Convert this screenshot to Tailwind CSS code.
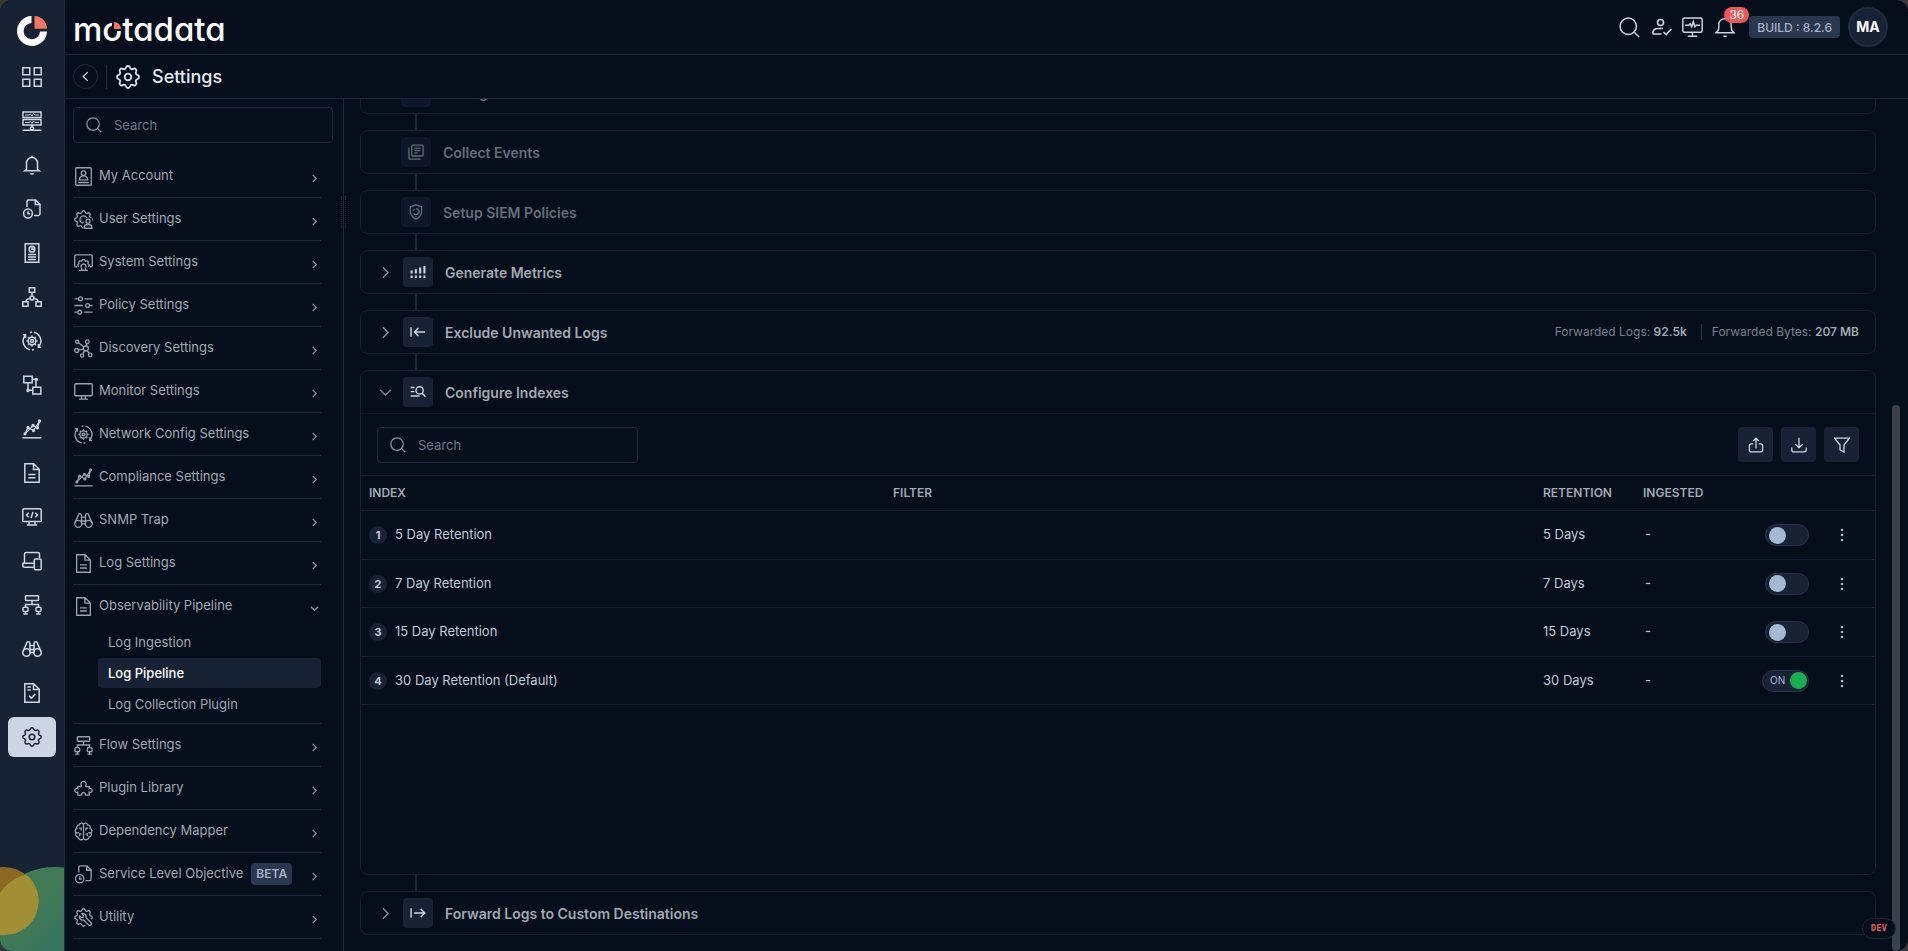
<!DOCTYPE html>
<html lang="en">
<head>
    <meta charset="UTF-8">
    <meta name="viewport" content="width=device-width, initial-scale=1.0">
    <title>Settings - Log Pipeline</title>
    <script src="https://cdn.jsdelivr.net/npm/@tailwindcss/browser@4"></script>
</head>
<body class="bg-[#37373a] font-['Inter','Liberation_Sans',sans-serif] text-[13px] text-[#a3a8b0]">

    <!-- icon set -->
    <svg class="hidden">
        <symbol id="gear" viewBox="2.2 2.2 19.6 19.6"><path d="M10.325 4.317c.426-1.756 2.924-1.756 3.35 0a1.724 1.724 0 0 0 2.573 1.066c1.543-.94 3.31.826 2.37 2.37a1.724 1.724 0 0 0 1.065 2.572c1.756.426 1.756 2.924 0 3.35a1.724 1.724 0 0 0-1.066 2.573c.94 1.543-.826 3.31-2.37 2.37a1.724 1.724 0 0 0-2.572 1.065c-.426 1.756-2.924 1.756-3.35 0a1.724 1.724 0 0 0-2.573-1.066c-1.543.94-3.31-.826-2.37-2.37a1.724 1.724 0 0 0-1.065-2.572c-1.756-.426-1.756-2.924 0-3.35a1.724 1.724 0 0 0 1.066-2.573c-.94-1.543.826-3.31 2.37-2.37 1 .608 2.296.07 2.572-1.065z"/><circle cx="12" cy="12" r="2.7"/></symbol>
        <symbol id="grid" viewBox="0 0 20 20"><path d="M.8.8h6.9v6.9H.8zM12.3.8h6.9v6.9h-6.9zM.8 12.3h6.9v6.9H.8zM12.3 12.3h6.9v6.9h-6.9z"/></symbol>
        <symbol id="server" viewBox="0 0 20 20"><path d="M1 1h18v5.5H1zM1 8.5h18V14H1zM.5 19.3h19M10 14v2"/><path d="M3 4h4l1.5-1 1.5 2 1.5-2.5L13 4h4M3 11.5h4l1.5-1 1.5 2 1.5-2.5 1.5 1.5h4" stroke-width="1"/><circle cx="10" cy="17.5" r="1.6"/></symbol>
        <symbol id="bell" viewBox="0 0 20 20"><path d="M10 .8v1.5M4.5 14.5V8a5.5 5.5 0 0 1 11 0v6.5l1.7 1.3H2.800zM8.500 18.300a2 2 0 0 0 3 0"/></symbol>
        <symbol id="doc-clock" viewBox="0 0 20 20"><path d="M5 8V2.500A1.600 1.600 0 0 1 6.600.9h7l4.400 4.400v9.500a1.600 1.600 0 0 1-1.600 1.600H12M13.300 1v4.500H18"/><circle cx="6" cy="14.5" r="4.4"/><path d="M6 12v2.700h2.200"/></symbol>
        <symbol id="report" viewBox="0 0 20 20"><path d="M3.200.8h13.600v18.400H3.200zM6 11.500h8M6 14h8M6 16.500h8"/><circle cx="10" cy="6.2" r="2.9"/><path d="M10 3.300v2.900h2.900"/></symbol>
        <symbol id="tree" viewBox="0 0 20 20"><path d="M7.300.8h5.400v4.400H7.300zM.8 14.800H6v4.400H.8zM14 14.800h5.200v4.400H14zM10 5.200v4M8 11.500l-3 .8-1.500 2.500M12 11.500l3 .8 1.500 2.500"/><circle cx="10" cy="11" r="1.9"/></symbol>
        <symbol id="config" viewBox="0 0 20 20"><path d="M8 18.800A9 9 0 0 1 3.300 4.200M3.600 7V3.800H.8M12 1.200a9 9 0 0 1 4.700 14.600M16.400 13v3.200h2.800M8 1.500l2-.5M10 19l2-.4"/><circle cx="10" cy="10" r="1.5"/><circle cx="10" cy="10" r="3.8"/><path d="M10 4.500v1.700M10 13.800v1.700M4.500 10h1.700M13.800 10h1.700M6.100 6.100l1.200 1.200M12.700 12.700l1.200 1.200M13.900 6.100l-1.200 1.200M7.300 12.700l-1.200 1.200"/></symbol>
        <symbol id="blocks" viewBox="0 0 20 20"><path d="M1.800 1.200h8.400v6.600H1.800zM10.800 12.300h8v6.600h-8zM10.200 4.300H14v8M6 7.800v7.500h4.800"/><circle cx="14.3" cy="4.5" r="1"/><circle cx="6" cy="15.5" r="1"/></symbol>
        <symbol id="chart" viewBox="0 0 20 20"><path d="M.5 18.800h19" /><path d="M3 14.500l3-6 5.500 3L17.500 2M3 14.800l8-8.300 4.500 2.500 2-6.500" stroke-width="1.2"/><circle cx="3" cy="14.8" r=".9"/><circle cx="6" cy="8.500" r=".9"/><circle cx="11.500" cy="11.500" r=".9"/><circle cx="11" cy="6.500" r=".9"/><circle cx="15.500" cy="8.800" r=".9"/><circle cx="17.500" cy="1.900" r=".9"/></symbol>
        <symbol id="doc" viewBox="0 0 20 20"><path d="M2.800.8h8.900l5.500 5.500v12.900H2.800zM11.500 1v5.500H17M6.300 11.500h7.200M6.300 14.700h7.200"/></symbol>
        <symbol id="code" viewBox="0 0 20 20"><rect x=".8" y="1.8" width="18.4" height="12.7" rx="1.2"/><path d="M7 14.500v3M13 14.500v3M4.800 18h10.400M6.700 5.800 4.500 8l2.200 2.200M13.300 5.800 15.500 8l-2.200 2.200M11 5l-2 6"/></symbol>
        <symbol id="devices" viewBox="0 0 20 20"><path d="M2.500 12V3.300a1.700 1.700 0 0 1 1.700-1.700h11.600a1.700 1.700 0 0 1 1.700 1.700V7M12 12.300H.8v2a2 2 0 0 0 2 2H12"/><rect x="12.3" y="8" width="6.9" height="10.7" rx="1.2"/><path d="M15.700 15.700v.2"/></symbol>
        <symbol id="flow" viewBox="0 0 20 20"><rect x="3.5" y=".8" width="13" height="4.7" rx=".8"/><path d="M6.500 3.100h.1M9 3.100h.1M11.500 3.100h.1M14 3.100h.1M10 5.500v4M3.500 12V9.500h13V12M3.500 16.500v2.300M16.500 16.500v2.300M1.300 19h4.400M14.300 19h4.400"/><rect x="1" y="12.3" width="5" height="4.3" rx="1"/><rect x="14" y="12.3" width="5" height="4.3" rx="1"/></symbol>
        <symbol id="binoculars" viewBox="0 0 20 20"><circle cx="4.5" cy="13.5" r="3.7"/><circle cx="15.5" cy="13.5" r="3.7"/><path d="M1 12.500 4.500 4.500a1.700 1.700 0 0 1 3.400 0v9M19 12.500l-3.500-8a1.700 1.700 0 0 0-3.400 0v9M7.900 6.500h4.200M7.900 10.500h4.200M8.200 13.500h3.600"/></symbol>
        <symbol id="checklist" viewBox="0 0 20 20"><path d="M2.800.8h8.900l5.500 5.500v12.900H2.800zM11.500 1v5.500H17M5.500 4h3.300M5.500 7h3.300M7 12.800l2.300 2.300 4-4"/></symbol>
        <symbol id="account" viewBox="0 0 20 20"><rect x="1.8" y=".8" width="16.4" height="18.4" rx="1"/><circle cx="10" cy="6.5" r="2.4"/><path d="M5.500 13.500c.6-5.500 8.400-5.500 9 0zM4.500 16.300h11"/></symbol>
        <symbol id="user-gear" viewBox="0 0 20 20"><use href="#gear" width="20" height="20"/><circle cx="10" cy="10" r="2.9" stroke="#050f1c"/><circle cx="10" cy="10" r="3.8"/><path d="M9.500 20v-5.500l2-2v-4h7.500V20z" fill="#050f1c" stroke="none"/><circle cx="14.800" cy="11.800" r="2.100"/><path d="M10.800 19.200v-1.400c0-3.400 8-3.400 8 0v1.400z"/></symbol>
        <symbol id="system" viewBox="0 0 20 20"><path d="M3.500 14.500H2a1.200 1.200 0 0 1-1.200-1.200V3.200A1.200 1.200 0 0 1 2 2h16a1.200 1.200 0 0 1 1.200 1.200v10.100a1.200 1.200 0 0 1-1.200 1.200h-1.500M5.300 18.200h9.400M8 18v-2.300M12 18v-2.300"/><path d="M5.200 14.300c-1.200-.3-1.600-1.900-.4-2.500.6-.3.700-.8.400-1.400-.6-1.300.6-2.400 1.800-1.900.7.300 1.100.1 1.300-.6.400-1.300 3-1.300 3.400 0 .2.700.6.900 1.300.6 1.200-.5 2.400.6 1.800 1.900-.3.600-.2 1.100.4 1.400 1.200.6.800 2.200-.4 2.500M7.800 15.500a2.600 2.600 0 1 1 4.400 0"/></symbol>
        <symbol id="sliders" viewBox="0 0 20 20"><path d="M.5 3h4.300M11 3h8.500M.5 10h9M16.500 10h3M.5 17h2.800M10.500 17h9"/><circle cx="6.8" cy="3" r="2"/><circle cx="14.3" cy="10" r="2"/><circle cx="6" cy="17" r="2"/></symbol>
        <symbol id="discovery" viewBox="0 0 20 20"><circle cx="12.5" cy="10" r="2.6"/><circle cx="3.3" cy="2.8" r="1.7"/><circle cx="14" cy="2.8" r="1.9"/><circle cx="2.8" cy="12" r="2"/><circle cx="8.5" cy="17.3" r="1.7"/><circle cx="17" cy="16.8" r="1.9"/><path d="m4.700 4 5.700 4.400M13.700 4.700 13 7.400M4.800 11.600l5.100-1M9.300 15.700l1.800-3.400M15.800 15.200 14 12.200"/></symbol>
        <symbol id="monitor" viewBox="0 0 20 20"><rect x=".8" y="1.8" width="18.4" height="12.7" rx="1.2"/><path d="M8 14.500v3M12 14.500v3M5.300 18h9.400"/></symbol>
        <symbol id="plugin" viewBox="0 0 20 20"><path d="M4 8h3c.8 0 .9-.7.600-1.300C6.500 4.500 8 2.500 10 2.500s3.500 2 2.400 4.200c-.3.600-.2 1.300.6 1.300h3v2.200c1.500-.7 3.200.2 3.200 1.800s-1.700 2.500-3.200 1.800V17h-4v-1c0-2.300-4-2.300-4 0v1H4v-3.200C2.500 14.500.8 13.600.8 12S2.500 9.500 4 10.200z"/></symbol>
        <symbol id="brain" viewBox="0 0 20 20"><path d="M10 2.500c-1-2-4-1.800-4.300.6C3.500 3 2.300 5 3 6.800 1 7.800.8 10 2 11.300.9 13.500 2.300 15.500 4 15.700c.3 2.800 4.300 4 6 1.800 1.700 2.200 5.700 1 6-1.800 1.700-.2 3.100-2.200 2-4.400 1.200-1.300 1-3.500-1-4.500.7-1.800-.5-3.800-2.700-3.700C14 .7 11 .5 10 2.500zM10 2.500v15M2 11.300h3M5 6.500h2.500V9M15 11.300h3M12.500 9V6.500H15M6 15v-2.500h2M14 15v-2.500h-2"/></symbol>
        <symbol id="utility" viewBox="0 0 20 20"><use href="#gear" width="20" height="20"/><circle cx="10" cy="10" r="2.8" fill="#050f1c" stroke="#050f1c"/><path d="M12 12l6-1 1 8-8-1z" fill="#050f1c" stroke="none"/><path d="M5.800 8.500a3.300 3.300 0 0 0 4.200 4l5.500 5.500c1.600 1.500 3.800-.8 2.400-2.400L12.500 10a3.400 3.400 0 0 0-4.300-4.200l1.900 2-.5 1.800-1.900.5z"/></symbol>
        <symbol id="search" viewBox="0 0 20 20"><circle cx="8.8" cy="8.8" r="7.8"/><path d="m14.500 14.500 4.700 4.500"/></symbol>
        <symbol id="user-check" viewBox="0 0 20 20"><circle cx="8.5" cy="5.5" r="3"/><path d="M9.500 17H2.200c-1.200 0-1.500-.8-1.300-1.700.4-3 2.600-3.800 5.100-3.800h5M11.500 15l2.700 2.500 5-5.500"/></symbol>
        <symbol id="monitor-pulse" viewBox="0 0 20 20"><rect x=".8" y="1" width="18.4" height="13.5" rx="1.5"/><path d="M10 14.500V18M5.500 18.300h9M3 7.800h3.500l1.300-1.500 1.500 3 1.500-5 1.500 5 1.200-1.500H17"/></symbol>
        <symbol id="alarm" viewBox="0 0 20 20"><path d="M1 15.800c2-1.300 2.800-3 2.800-5.500V7.500C3.800 4 6.500 1.800 10 1.800s6.200 2.200 6.200 5.700v2.800c0 2.500.8 4.200 2.800 5.500zM8.500 18.800a2.200 2.200 0 0 0 3 0"/></symbol>
        <symbol id="right" viewBox="0 0 20 20"><path d="m6 2 8 8-8 8"/></symbol>
        <symbol id="down" viewBox="0 0 20 20"><path d="m2 6 8 8 8-8"/></symbol>
        <symbol id="left" viewBox="0 0 20 20"><path d="m14 2-8 8 8 8"/></symbol>
        <symbol id="collect" viewBox="0 0 20 20"><rect x="4.8" y="1.3" width="14" height="13.7" rx="1.2"/><path d="M1.200 4.500v13a1.500 1.500 0 0 0 1.500 1.500h13M8 5.200h7.500M8 8.200h7.500M8 11.200h4"/></symbol>
        <symbol id="shield" viewBox="0 0 20 20"><path d="m10 1 7 2.500V9c0 5-3 8-7 10-4-2-7-5-7-10V3.500z"/><path d="M10 5.800a3.700 3.700 0 1 1-3.200 5.500M6.500 8.500 8 6.300"/></symbol>
        <symbol id="metrics" viewBox="0 0 20 20"><path d="M2 17.500v-3M2 12V8M7.300 17.500v-3M7.300 12V6.500M12.700 17.500v-3M12.700 12V4.500M18 17.500v-3M18 12V2.500" stroke-width="2.6"/></symbol>
        <symbol id="exclude" viewBox="0 0 20 20"><path d="M1.300 4v12M19 10H6M10.500 5l-5 5 5 5"/></symbol>
        <symbol id="forward" viewBox="0 0 20 20"><path d="M1.300 4v12M5 10h13M13.500 5l5 5-5 5"/></symbol>
        <symbol id="index" viewBox="0 0 20 20"><circle cx="12" cy="8" r="4.5"/><path d="m15.300 11.500 4 4.500M.8 4.300h4.700M.8 9.500h4.700M.8 15h11"/></symbol>
        <symbol id="share" viewBox="0 0 20 20"><path d="M6.500 8.500H4A2.200 2.200 0 0 0 1.800 10.700v5.800A2.200 2.200 0 0 0 4 18.700h12a2.200 2.200 0 0 0 2.200-2.200v-5.800A2.200 2.200 0 0 0 16 8.500h-2.500M10 14.500V1.500M6.500 5 10 1.500 13.500 5"/></symbol>
        <symbol id="download" viewBox="0 0 20 20"><path d="M10 1v12.500M5.500 9l4.500 4.500L14.500 9M1 13v3.500A2.200 2.200 0 0 0 3.200 18.700h13.600a2.200 2.200 0 0 0 2.200-2.200V13"/></symbol>
        <symbol id="funnel" viewBox="0 0 20 20"><path d="M.8 1.500h18.400L12.500 10v8.800L7.500 16v-6z"/></symbol>
    </svg>

    <div class="flex h-screen overflow-hidden rounded-xl bg-[#050f1c]">

        <!-- left icon rail -->
        <aside class="relative flex w-[65px] shrink-0 flex-col overflow-hidden border-r border-[#1c2a3d] bg-[#172334] text-[#cbd5e4]">
            <a href="#" aria-label="Home" class="flex h-[55px] shrink-0 items-center justify-center pt-1.5">
                <svg class="size-[30px]" viewBox="0 0 30 30"><path d="M14.500 0A15 15 0 1 0 30 15.500H23A8.200 8.200 0 1 1 14.500 6.900z" fill="#fff"/><path d="M17.500 0A13 13 0 0 1 30 12.700H17.500z" fill="#f47560"/></svg>
            </a>
            <nav id="rail" class="flex flex-col"></nav>
            <svg class="absolute bottom-0 left-0 h-[84px] w-16" viewBox="0 0 64 84">
                <defs><linearGradient id="leaf" x1="0" y1="0" x2="1" y2="1"><stop offset=".3" stop-color="#407a55"/><stop offset="1" stop-color="#286a70"/></linearGradient></defs>
                <circle cx="4" cy="34" r="34" fill="#8b6824"/>
                <circle cx="55" cy="71" r="71" fill="url(#leaf)"/>
                <path d="M0 26C7 16 16 10 26 7.500A34 34 0 0 1 4 68H0z" fill="#a18f36"/>
            </svg>
        </aside>

        <div class="flex min-w-0 grow flex-col">

            <header class="flex h-[55px] shrink-0 items-center justify-between border-b border-[#1c2a3d] pl-2 pr-5">
                <span class="pt-1 text-[33px]/[40px] font-medium text-white [font-feature-settings:'cv11','ss03']">m<span class="relative">o<svg class="absolute right-0 top-3 size-[10px]" viewBox="0 0 10 10"><path d="M0 0h10v10H0z" fill="#050f1c"/><path d="M2 1a7 7 0 0 1 7 7H2z" fill="#f47560"/></svg></span>tadata</span>
                <div class="flex items-center text-[#cbd5e4]">
                    <button aria-label="Search" class="mr-3"><svg class="size-[21px] fill-none stroke-current stroke-[1.4]"><use href="#search"/></svg></button>
                    <button aria-label="Users" class="mr-2.5"><svg class="size-5 fill-none stroke-current stroke-[1.6]"><use href="#user-check"/></svg></button>
                    <button aria-label="Monitoring" class="mr-3"><svg class="size-[21px] fill-none stroke-current stroke-[1.4]"><use href="#monitor-pulse"/></svg></button>
                    <button aria-label="Alerts" class="relative mr-3.5">
                        <svg class="size-5 fill-none stroke-current stroke-[1.4]"><use href="#alarm"/></svg>
                        <span class="absolute -right-3.5 -top-2.5 h-4 rounded-full bg-[#ef5656] px-[5px] text-[12px]/[16px] text-white">36</span>
                    </button>
                    <span class="mr-2 h-[22px] rounded bg-[#2a384f] px-2 text-[12px]/[23px] font-medium text-[#a6b0c3]">BUILD : 8.2.6</span>
                    <button class="size-10 rounded-full border-2 border-[#1e2c3f] bg-[#172334] text-sm font-bold text-white">MA</button>
                </div>
            </header>

            <div class="flex h-11 shrink-0 items-center border-b border-[#1c2a3d] pl-2">
                <button aria-label="Back" class="flex size-[25px] items-center justify-center rounded-full border border-[#1c2a3d] text-[#cbd5e4]"><svg class="size-[11px] fill-none stroke-current stroke-[2.4]"><use href="#left"/></svg></button>
                <span class="ml-2 h-6 w-px bg-[#1c2a3d]"></span>
                <svg class="ml-[9px] size-6 fill-none stroke-[#d5deea] stroke-[1.5]"><use href="#gear"/></svg>
                <h1 class="ml-3 text-lg font-medium text-[#e4ebf5]">Settings</h1>
            </div>

            <div class="flex min-h-0 grow">

                <!-- settings menu -->
                <div class="relative w-[279px] shrink-0 border-r border-[#1c2a3d] pl-2 pt-2">
                    <label class="flex h-9 w-[260px] items-center rounded border border-[#1c2a3d] pl-3">
                        <svg class="size-4 fill-none stroke-[#8b95a5] stroke-[1.6]"><use href="#search"/></svg>
                        <input type="text" aria-label="Search settings" placeholder="Search" class="ml-3 w-40 bg-transparent pt-0.5 outline-none placeholder:text-[#6f7884]">
                    </label>
                    <nav id="menu" class="mt-3 w-[248px]"></nav>
                    <span class="absolute -right-[3px] top-[97px] h-8 w-[5px] border-x border-dotted border-[#1c2a3d]"></span>
                </div>

                <!-- pipeline steps, scrolled to the end -->
                <main class="relative flex min-w-0 grow flex-col justify-end overflow-hidden pb-4 pl-4 pr-8">
                    <section class="flex h-11 shrink-0 items-center rounded-lg border border-[#142131] pl-10 text-[#656d79]">
                        <span class="flex size-[30px] items-center justify-center rounded bg-[#0c1827]"></span>
                        <h2 class="ml-3 pt-0.5 text-sm font-semibold">Storage</h2>
                    </section>
                    <span class="ml-[55px] h-4 w-0.5 shrink-0 bg-[#1b283b]"></span>
                    <section class="flex h-11 shrink-0 items-center rounded-lg border border-[#142131] pl-10 text-[#656d79]">
                        <span class="flex size-[30px] items-center justify-center rounded bg-[#0c1827]"><svg class="size-4 fill-none stroke-current stroke-[1.6]"><use href="#collect"/></svg></span>
                        <h2 class="ml-3 pt-0.5 text-sm font-semibold">Collect Events</h2>
                    </section>
                    <span class="ml-[55px] h-4 w-0.5 shrink-0 bg-[#1b283b]"></span>
                    <section class="flex h-11 shrink-0 items-center rounded-lg border border-[#142131] pl-10 text-[#656d79]">
                        <span class="flex size-[30px] items-center justify-center rounded bg-[#0c1827]"><svg class="size-4 fill-none stroke-current stroke-[1.6]"><use href="#shield"/></svg></span>
                        <h2 class="ml-3 pt-0.5 text-sm font-semibold">Setup SIEM Policies</h2>
                    </section>
                    <span class="ml-[55px] h-4 w-0.5 shrink-0 bg-[#1b283b]"></span>
                    <section class="flex h-11 shrink-0 items-center rounded-lg border border-[#142131] pl-[18px]">
                        <button aria-label="Expand" class="w-6"><svg class="size-[13px] fill-none stroke-[#8b95a5] stroke-2"><use href="#right"/></svg></button>
                        <span class="flex size-[30px] items-center justify-center rounded bg-[#172334] text-[#cbd5e4]"><svg class="size-4 fill-none stroke-current"><use href="#metrics"/></svg></span>
                        <h2 class="ml-3 pt-0.5 text-sm font-semibold">Generate Metrics</h2>
                    </section>
                    <span class="ml-[55px] h-4 w-0.5 shrink-0 bg-[#1b283b]"></span>
                    <section class="flex h-11 shrink-0 items-center rounded-lg border border-[#142131] pl-[18px] pr-4">
                        <button aria-label="Expand" class="w-6"><svg class="size-[13px] fill-none stroke-[#8b95a5] stroke-2"><use href="#right"/></svg></button>
                        <span class="flex size-[30px] items-center justify-center rounded bg-[#172334] text-[#cbd5e4]"><svg class="size-4 fill-none stroke-current stroke-[1.8]"><use href="#exclude"/></svg></span>
                        <h2 class="ml-3 pt-0.5 text-sm font-semibold">Exclude Unwanted Logs</h2>
                        <p class="ml-auto text-xs text-[#77808d]">Forwarded Logs: <b class="font-semibold text-[#a3a8b0]">92.5k</b></p>
                        <p class="ml-3.5 border-l border-[#2b3644] pl-2.5 text-xs text-[#77808d]">Forwarded Bytes: <b class="font-semibold text-[#a3a8b0]">207 MB</b></p>
                    </section>
                    <span class="ml-[55px] h-4 w-0.5 shrink-0 bg-[#1b283b]"></span>

                    <section class="h-[505px] shrink-0 rounded-lg border border-[#142131]">
                        <div class="flex h-[43px] items-center border-b border-[#0e1926] pl-[18px]">
                            <button aria-label="Collapse" class="w-6"><svg class="size-[13px] fill-none stroke-[#8b95a5] stroke-2"><use href="#down"/></svg></button>
                            <span class="flex size-[30px] items-center justify-center rounded bg-[#172334] text-[#cbd5e4]"><svg class="size-4 fill-none stroke-current stroke-[1.8]"><use href="#index"/></svg></span>
                            <h2 class="ml-3 pt-0.5 text-sm font-semibold">Configure Indexes</h2>
                        </div>
                        <div class="flex h-[61px] items-center gap-2 px-4">
                            <label class="mr-auto flex h-9 w-[261px] items-center rounded border border-[#1c2a3d] pl-3">
                                <svg class="size-4 fill-none stroke-[#8b95a5] stroke-[1.6]"><use href="#search"/></svg>
                                <input type="text" aria-label="Search indexes" placeholder="Search" class="ml-3 w-40 bg-transparent pt-0.5 outline-none placeholder:text-[#6f7884]">
                            </label>
                            <button aria-label="Share" class="flex size-[35px] items-center justify-center rounded bg-[#172334] text-[#cbd5e4]"><svg class="size-4 fill-none stroke-current stroke-[1.6]"><use href="#share"/></svg></button>
                            <button aria-label="Download" class="flex size-[35px] items-center justify-center rounded bg-[#172334] text-[#cbd5e4]"><svg class="size-4 fill-none stroke-current stroke-[1.6]"><use href="#download"/></svg></button>
                            <button aria-label="Filter" class="flex size-[35px] items-center justify-center rounded bg-[#172334] text-[#cbd5e4]"><svg class="size-4 fill-none stroke-current stroke-[1.6]"><use href="#funnel"/></svg></button>
                        </div>
                        <table class="w-full table-fixed text-left">
                            <thead>
                                <tr class="h-[35px] border-y border-[#142131] text-xs">
                                    <th class="w-[524px] pl-2 font-semibold">INDEX</th>
                                    <th class="pl-2 font-semibold">FILTER</th>
                                    <th class="w-[100px] pl-2 font-semibold">RETENTION</th>
                                    <th class="w-[100px] pl-2 font-semibold">INGESTED</th>
                                    <th class="w-[74px]"></th>
                                    <th class="w-[66px]"></th>
                                </tr>
                            </thead>
                            <tbody id="indexes"></tbody>
                        </table>
                    </section>

                    <span class="ml-[55px] h-4 w-0.5 shrink-0 bg-[#1b283b]"></span>
                    <section class="flex h-11 shrink-0 items-center rounded-lg border border-[#142131] pl-[18px]">
                        <button aria-label="Expand" class="w-6"><svg class="size-[13px] fill-none stroke-[#8b95a5] stroke-2"><use href="#right"/></svg></button>
                        <span class="flex size-[30px] items-center justify-center rounded bg-[#172334] text-[#cbd5e4]"><svg class="size-4 fill-none stroke-current stroke-[1.8]"><use href="#forward"/></svg></span>
                        <h2 class="ml-3 pt-0.5 text-sm font-semibold">Forward Logs to Custom Destinations</h2>
                    </section>

                    <span class="absolute bottom-0 right-2 h-[546px] w-2 rounded-full bg-[#3b404a]"></span>
                    <span class="absolute bottom-3 right-3 rounded-full border border-[#1c2a3d] bg-[#050f1c] px-2 font-['DejaVu_Sans_Mono',monospace] text-[9px]/[19px] font-bold text-[#e35858]">DEV</span>
                </main>
            </div>
        </div>
    </div>

    <script>
        const railIcons = ['grid', 'server', 'bell', 'doc-clock', 'report', 'tree', 'config', 'blocks', 'chart', 'doc', 'code', 'devices', 'flow', 'binoculars', 'checklist', 'gear'];
        document.getElementById('rail').innerHTML = railIcons.map(name => `
            <a href="#" aria-label="${name}" class="flex h-11 items-center justify-center">
                <span class="${name === 'gear' ? 'flex h-10 w-12 items-center justify-center rounded-md bg-[#cbd5e4] text-[#172334]' : ''}">
                    <svg class="size-5 fill-none stroke-current stroke-[1.5]"><use href="#${name}"/></svg>
                </span>
            </a>`).join('');

        const menu = [
            ['account', 'My Account'],
            ['user-gear', 'User Settings'],
            ['system', 'System Settings'],
            ['sliders', 'Policy Settings'],
            ['discovery', 'Discovery Settings'],
            ['monitor', 'Monitor Settings'],
            ['config', 'Network Config Settings'],
            ['chart', 'Compliance Settings'],
            ['binoculars', 'SNMP Trap'],
            ['doc', 'Log Settings'],
            ['doc', 'Observability Pipeline', ['Log Ingestion', 'Log Pipeline', 'Log Collection Plugin']],
            ['flow', 'Flow Settings'],
            ['plugin', 'Plugin Library'],
            ['brain', 'Dependency Mapper'],
            ['doc-clock', 'Service Level Objective'],
            ['utility', 'Utility']
        ];
        document.getElementById('menu').innerHTML = menu.map(([icon, label, children]) => `
            <div class="border-b border-[#1c2a3d]">
                <a href="#" class="flex h-[42px] items-center">
                    <svg class="ml-px mr-1.5 size-[19px] fill-none stroke-[#98a1ae] stroke-[1.4]"><use href="#${icon}"/></svg>
                    ${label}
                    ${icon === 'doc-clock' ? '<span class="ml-2 rounded bg-[#2a384f] px-[5px] text-xs/[22px] font-semibold text-[#a6b0c3]">BETA</span>' : ''}
                    <svg class="ml-auto mr-0.5 mt-1 size-[9px] fill-none stroke-[#8b95a5] stroke-[2.8]"><use href="#${children ? 'down' : 'right'}"/></svg>
                </a>
                ${children ? `<div class="flex flex-col gap-px pb-1 pl-[25px]">${children.map(child => `
                    <a href="#" class="rounded pl-2.5 leading-[30px] ${child === 'Log Pipeline' ? 'bg-[#172334] font-medium text-white' : ''}">${child}</a>`).join('')}
                </div>` : ''}
            </div>`).join('');

        const indexes = [
            ['5 Day Retention', '5 Days', false],
            ['7 Day Retention', '7 Days', false],
            ['15 Day Retention', '15 Days', false],
            ['30 Day Retention (Default)', '30 Days', true]
        ];
        document.getElementById('indexes').innerHTML = indexes.map(([name, days, on], i) => `
            <tr class="h-12 border-b border-[#142131] text-[#c3cad6] odd:h-[49px]">
                <td class="pl-2"><div class="flex items-center gap-2"><span class="size-[18px] rounded-full bg-[#172334] text-center text-[11px]/[18px] font-bold">${i + 1}</span>${name}</div></td>
                <td></td>
                <td class="pl-2">${days}</td>
                <td class="pl-2.5">-</td>
                <td>
                    <label class="ml-auto flex h-[22px] items-center rounded-full border border-[#27354a] bg-[#172334] ${on ? 'w-[47px] justify-between pl-[7px] pr-px' : 'w-11 pl-[3px]'}">
                        ${on ? '<span class="text-[10px] text-[#a6b8d2]">ON</span>' : ''}
                        <input type="checkbox" aria-label="${name}" ${on ? 'checked' : ''} class="size-[17px] appearance-none rounded-full bg-[#a6b8d2] checked:bg-[#17b050]">
                    </label>
                </td>
                <td class="pl-[26px]"><button aria-label="Actions" class="block"><svg class="h-4 w-[14px] fill-[#a6b8d2]" viewBox="0 0 14 16"><circle cx="7" cy="3" r="1.3"/><circle cx="7" cy="8" r="1.3"/><circle cx="7" cy="13" r="1.3"/></svg></button></td>
            </tr>`).join('');
    </script>
</body>
</html>
